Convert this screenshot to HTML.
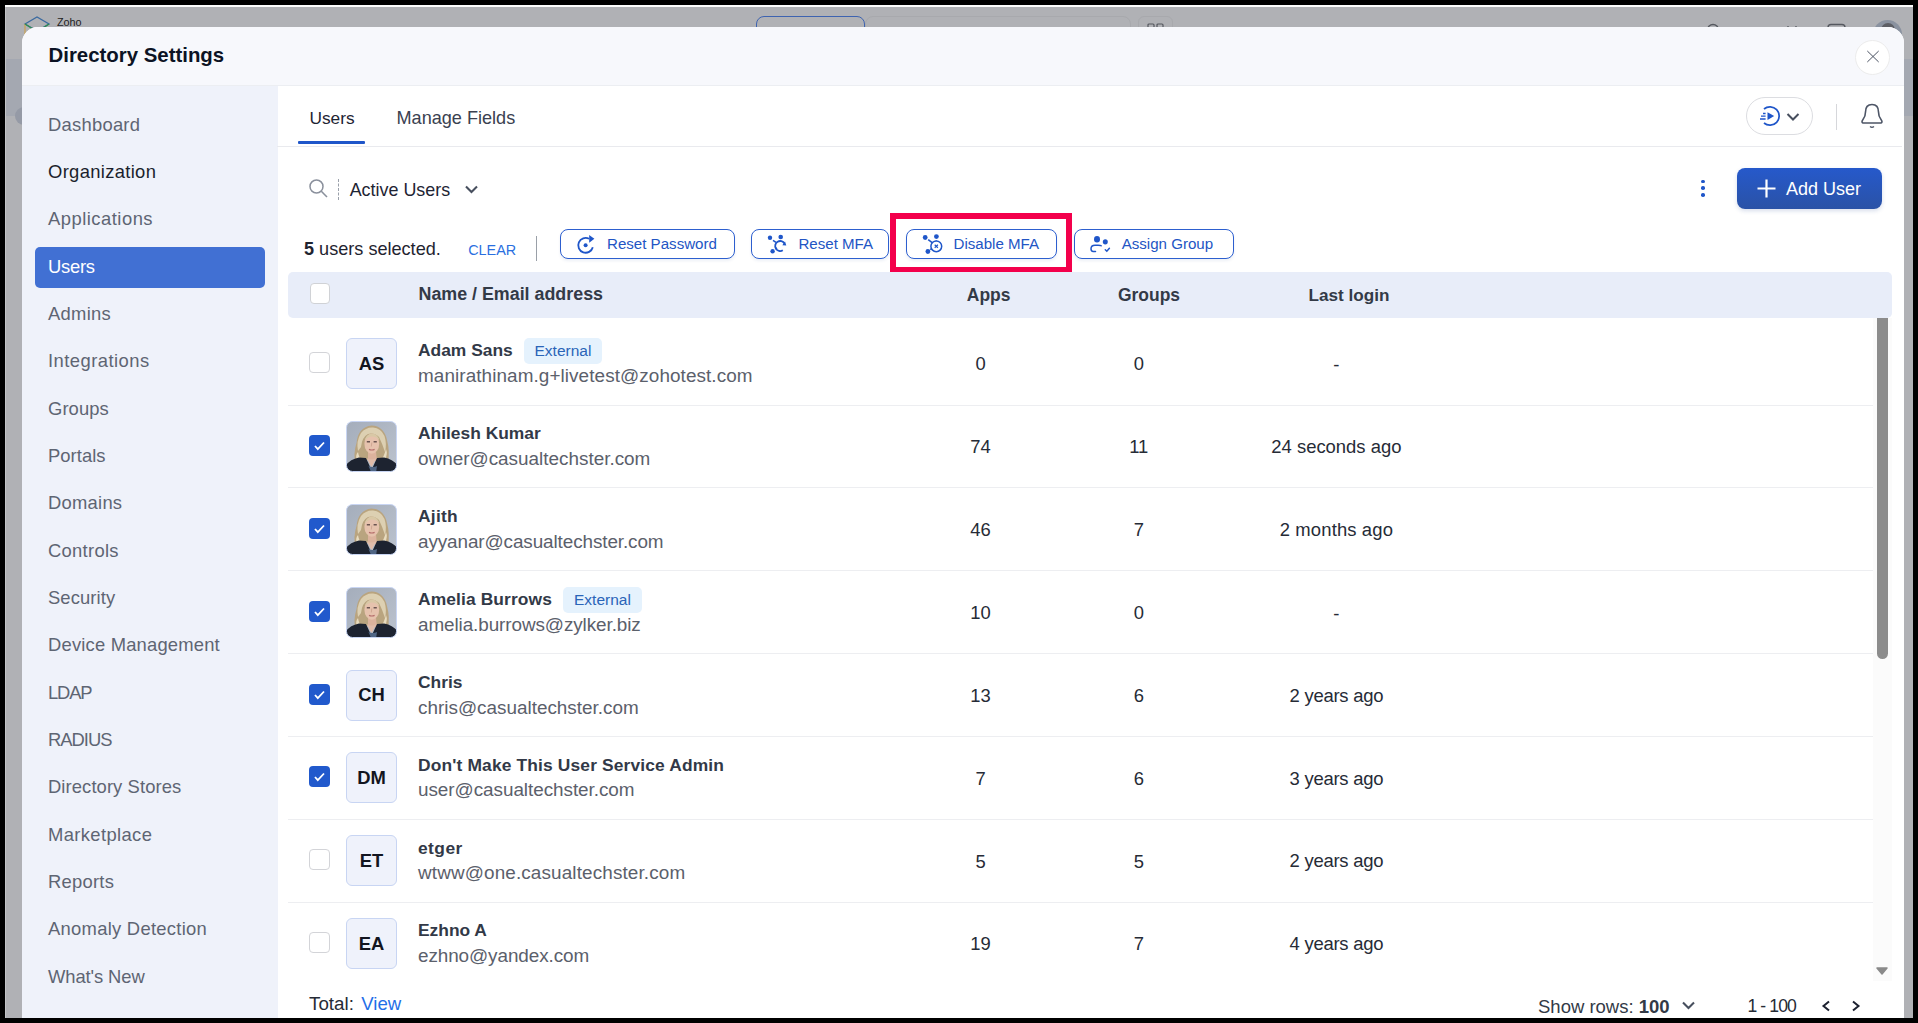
<!DOCTYPE html>
<html><head><meta charset="utf-8"><style>
html,body{margin:0;padding:0;}
body{width:1918px;height:1023px;background:#000;position:relative;overflow:hidden;font-family:"Liberation Sans", sans-serif;}
.t{position:absolute;line-height:1;white-space:nowrap;}
.b{position:absolute;}
</style></head><body>
<div class="b" style="left:5px;top:5px;width:1908px;height:1013px;background:#b0b1b5;"></div>
<div class="b" style="left:5px;top:5px;width:1908px;height:2px;background:#fdfdfd;"></div>
<div class="b" style="left:5px;top:59px;width:1908px;height:57px;background:#a4a8b1;"></div>
<div class="b" style="left:5px;top:7px;width:1px;height:1011px;background:#c2c3c6;"></div>
<div class="b" style="left:15px;top:106.5px;width:18px;height:18px;border-radius:50%;background:#959aa6;"></div>
<svg class="b" style="left:22px;top:14px" width="30" height="30" viewBox="0 0 30 30"><path d="M3 10 L15 3 L27 10 L15 17 Z" fill="none" stroke="#3a6aa0" stroke-width="1.3"/><path d="M3 10 L3 25" stroke="#c9a45a" stroke-width="1.3"/><path d="M3 10 L11 15" stroke="#2f8f4f" stroke-width="1.3"/><path d="M21 14 L27 10" stroke="#2f8f4f" stroke-width="1.3"/></svg>
<div class="t" style="left:57.00px;top:17.46px;font-size:10.8px;font-weight:normal;color:#222;">Zoho</div>
<div class="b" style="left:756px;top:16px;width:109px;height:24px;border:1.5px solid #3e63b0;border-radius:8px;box-sizing:border-box;"></div>
<div class="t" style="left:779.00px;top:25.20px;font-size:13px;font-weight:normal;color:#3e63b0;">Personal</div>
<svg class="b" style="left:1147px;top:22px" width="18" height="8" viewBox="0 0 18 8"><rect x="1" y="2" width="6" height="6" rx="1" fill="none" stroke="#55585f" stroke-width="1.2"/><rect x="10" y="2" width="6" height="6" rx="1" fill="none" stroke="#55585f" stroke-width="1.2"/></svg>
<div class="b" style="left:1873px;top:19.5px;width:29px;height:29px;border-radius:50%;background:#8a92a0;"></div>
<div class="b" style="left:1881px;top:23px;width:14px;height:14px;border-radius:50%;background:#5d5f66;"></div>
<div class="b" style="left:865px;top:16px;width:266px;height:24px;border:1px solid #a8a9ad;border-radius:8px;box-sizing:border-box;"></div>
<div class="b" style="left:1138px;top:16px;width:35px;height:24px;border:1px solid #a8a9ad;border-radius:6px;box-sizing:border-box;"></div>
<svg class="b" style="left:1700px;top:20px" width="150" height="10" viewBox="0 0 150 10"><circle cx="13" cy="10" r="5.5" fill="none" stroke="#55585f" stroke-width="1.4"/><path d="M55 8 L55 10" stroke="#55585f" stroke-width="1.6"/><path d="M88 6 V10 M96 6 V10 M86 9 H102" stroke="#55585f" stroke-width="1.3"/><rect x="128" y="4.5" width="17" height="12" rx="3" fill="none" stroke="#55585f" stroke-width="1.4"/></svg>
<div class="t" style="left:886.00px;top:25.20px;font-size:13px;font-weight:normal;color:#45474c;">Search in Users</div>
<div class="b" style="left:22px;top:27px;width:1882px;height:991px;background:#ffffff;border-radius:16px 16px 0 0;overflow:hidden;"></div>
<div class="b" style="left:22px;top:27px;width:1882px;height:58px;background:#f7f8fc;border-radius:16px 16px 0 0;"></div>
<div class="b" style="left:22px;top:86px;width:256px;height:932px;background:#eff2fa;"></div>
<div class="t" style="left:48.50px;top:44.73px;font-size:20.4px;font-weight:bold;color:#0c1324;">Directory Settings</div>
<div class="b" style="left:1855.3px;top:40.4px;width:35px;height:35px;border-radius:50%;background:#fff;border:1px solid #ececec;box-sizing:border-box;"></div>
<svg class="b" style="left:1866px;top:50px" width="14" height="14" viewBox="0 0 14 14"><path d="M1.3 1 L12.7 12 M12.7 1 L1.3 12" stroke="#4a5262" stroke-width="1" fill="none"/></svg>
<div class="b" style="left:22px;top:85px;width:1882px;height:1px;background:#eceef2;"></div>
<div class="b" style="left:35px;top:247px;width:230px;height:41px;background:#4170d3;border-radius:5px;"></div>
<div class="t" style="left:48.00px;top:115.72px;font-size:18.4px;font-weight:normal;color:#5e6573;letter-spacing:0.25px;">Dashboard</div>
<div class="t" style="left:48.00px;top:163.05px;font-size:18.4px;font-weight:normal;color:#1a1f2c;letter-spacing:0.327px;">Organization</div>
<div class="t" style="left:48.00px;top:210.38px;font-size:18.4px;font-weight:normal;color:#5e6573;letter-spacing:0.491px;">Applications</div>
<div class="t" style="left:48.00px;top:257.71px;font-size:18.4px;font-weight:normal;color:#ffffff;letter-spacing:-0.25px;">Users</div>
<div class="t" style="left:48.00px;top:305.04px;font-size:18.4px;font-weight:normal;color:#5e6573;letter-spacing:0.28px;">Admins</div>
<div class="t" style="left:48.00px;top:352.37px;font-size:18.4px;font-weight:normal;color:#5e6573;letter-spacing:0.455px;">Integrations</div>
<div class="t" style="left:48.00px;top:399.70px;font-size:18.4px;font-weight:normal;color:#5e6573;letter-spacing:0.08px;">Groups</div>
<div class="t" style="left:48.00px;top:447.03px;font-size:18.4px;font-weight:normal;color:#5e6573;letter-spacing:0.05px;">Portals</div>
<div class="t" style="left:48.00px;top:494.36px;font-size:18.4px;font-weight:normal;color:#5e6573;letter-spacing:0.25px;">Domains</div>
<div class="t" style="left:48.00px;top:541.69px;font-size:18.4px;font-weight:normal;color:#5e6573;letter-spacing:0.286px;">Controls</div>
<div class="t" style="left:48.00px;top:589.02px;font-size:18.4px;font-weight:normal;color:#5e6573;letter-spacing:0.1px;">Security</div>
<div class="t" style="left:48.00px;top:636.35px;font-size:18.4px;font-weight:normal;color:#5e6573;letter-spacing:0.188px;">Device Management</div>
<div class="t" style="left:48.00px;top:683.68px;font-size:18.4px;font-weight:normal;color:#5e6573;letter-spacing:-1.167px;">LDAP</div>
<div class="t" style="left:48.00px;top:731.01px;font-size:18.4px;font-weight:normal;color:#5e6573;letter-spacing:-1.0px;">RADIUS</div>
<div class="t" style="left:48.00px;top:778.34px;font-size:18.4px;font-weight:normal;color:#5e6573;letter-spacing:0.093px;">Directory Stores</div>
<div class="t" style="left:48.00px;top:825.67px;font-size:18.4px;font-weight:normal;color:#5e6573;letter-spacing:0.37px;">Marketplace</div>
<div class="t" style="left:48.00px;top:873.00px;font-size:18.4px;font-weight:normal;color:#5e6573;letter-spacing:0.25px;">Reports</div>
<div class="t" style="left:48.00px;top:920.33px;font-size:18.4px;font-weight:normal;color:#5e6573;letter-spacing:0.275px;">Anomaly Detection</div>
<div class="t" style="left:48.00px;top:967.66px;font-size:18.4px;font-weight:normal;color:#5e6573;letter-spacing:-0.089px;">What's New</div>
<div class="t" style="left:309.50px;top:110.36px;font-size:17.3px;font-weight:normal;color:#1e2433;">Users</div>
<div class="t" style="left:396.50px;top:109.28px;font-size:18.1px;font-weight:normal;color:#3a4150;">Manage Fields</div>
<div class="b" style="left:298px;top:141px;width:67px;height:3px;background:#1f56c9;border-radius:1px;"></div>
<div class="b" style="left:277px;top:146px;width:1625px;height:1px;background:#e9eaee;"></div>
<div class="b" style="left:1746px;top:97px;width:67px;height:38px;border-radius:19px;border:1px solid #dcdde1;box-sizing:border-box;background:#fff;"></div>
<svg class="b" style="left:1757px;top:104px" width="26" height="24" viewBox="0 0 26 24"><path d="M7 5 A9.2 9.2 0 1 1 7 19" fill="none" stroke="#1f56c9" stroke-width="1.7"/><path d="M10.5 8.2 L17.2 12.1 L10.5 16 Z" fill="#1f56c9"/><path d="M6 9.5 H8.6 M4 12.2 H8.6 M3 15 H8.6" stroke="#1f56c9" stroke-width="1.3"/></svg>
<svg class="b" style="left:1786px;top:112px" width="14" height="10" viewBox="0 0 14 10"><path d="M1.5 2 L7 7.5 L12.5 2" fill="none" stroke="#474f5e" stroke-width="2"/></svg>
<div class="b" style="left:1836px;top:104px;width:1px;height:26px;background:#d6d7db;"></div>
<svg class="b" style="left:1859px;top:101px" width="26" height="30" viewBox="0 0 26 30"><path d="M4 22 Q2 21 4 18.5 Q6.5 15.5 6.5 11 Q6.5 3.5 13 3.5 Q19.5 3.5 19.5 11 Q19.5 15.5 22 18.5 Q24 21 22 22 Z" fill="none" stroke="#4d5566" stroke-width="1.6"/><path d="M11 25.5 Q13 27 15 25.5" fill="none" stroke="#4d5566" stroke-width="1.4"/></svg>
<svg class="b" style="left:308px;top:178px" width="22" height="22" viewBox="0 0 22 22"><circle cx="8.5" cy="8.5" r="6.5" fill="none" stroke="#8a909c" stroke-width="1.5"/><path d="M13.3 13.3 L19 19" stroke="#8a909c" stroke-width="1.6"/></svg>
<div class="b" style="left:338px;top:179px;width:0;height:21px;border-left:1px dashed #9aa0aa;"></div>
<div class="t" style="left:349.70px;top:181.65px;font-size:17.9px;font-weight:normal;color:#1e2433;">Active Users</div>
<svg class="b" style="left:464px;top:184px" width="15" height="11" viewBox="0 0 15 11"><path d="M2 2.5 L7.5 8 L13 2.5" fill="none" stroke="#474f5e" stroke-width="2.1"/></svg>
<div class="b" style="left:1701.0px;top:179.5px;width:3.6px;height:3.6px;border-radius:50%;background:#1f56c9;"></div>
<div class="b" style="left:1701.0px;top:186.2px;width:3.6px;height:3.6px;border-radius:50%;background:#1f56c9;"></div>
<div class="b" style="left:1701.0px;top:193.0px;width:3.6px;height:3.6px;border-radius:50%;background:#1f56c9;"></div>
<div class="b" style="left:1737px;top:168px;width:145px;height:41px;background:linear-gradient(#2659cb,#2a52a6);border-radius:8px;box-shadow:0 2px 4px rgba(40,70,150,0.18);"></div>
<svg class="b" style="left:1756px;top:178px" width="21" height="21" viewBox="0 0 21 21"><path d="M10.5 1.5 V19.5 M1.5 10.5 H19.5" stroke="#fff" stroke-width="2.2"/></svg>
<div class="t" style="left:1786.00px;top:179.56px;font-size:18px;font-weight:normal;color:#ffffff;">Add User</div>
<div class="t" style="left:304.00px;top:239.88px;font-size:18.1px;font-weight:normal;color:#1f2430;"><b>5</b> users selected.</div>
<div class="t" style="left:468.20px;top:243.01px;font-size:14.4px;font-weight:normal;color:#2a6fe0;">CLEAR</div>
<div class="b" style="left:536px;top:236px;width:1px;height:25px;background:#9aa0a8;"></div>
<div class="b" style="left:560px;top:229px;width:175px;height:30px;border:1px solid #2d5fcf;border-radius:8px;box-sizing:border-box;background:#fff;box-shadow:0 2px 3px rgba(30,60,140,0.08);"></div>
<svg class="b" style="left:574px;top:232px" width="24" height="24" viewBox="0 0 24 24"><path d="M15.1 6.8 A7.4 7.4 0 1 0 18.8 15.2" fill="none" stroke="#1f56c9" stroke-width="1.8"/><path d="M15.2 2.9 L20.4 6.8 L15.2 10.7 Z" fill="#1f56c9"/><circle cx="11.6" cy="13.3" r="2" fill="#1f56c9"/></svg>
<div class="t" style="left:607.00px;top:236.02px;font-size:15.1px;font-weight:normal;color:#2255c4;">Reset Password</div>
<div class="b" style="left:751px;top:229px;width:138px;height:30px;border:1px solid #2d5fcf;border-radius:8px;box-sizing:border-box;background:#fff;box-shadow:0 2px 3px rgba(30,60,140,0.08);"></div>
<svg class="b" style="left:764px;top:230px" width="28" height="28" viewBox="0 0 28 28"><circle cx="6" cy="7.8" r="2.2" fill="#1f56c9"/><circle cx="16.7" cy="7" r="2.3" fill="#1f56c9"/><circle cx="8.6" cy="21.2" r="2.2" fill="#1f56c9"/><path d="M9 10.3 L12 12.3" stroke="#1f56c9" stroke-width="1.6"/><path d="M20.5 13.5 A5 5 0 1 0 18.8 20.3" fill="none" stroke="#1f56c9" stroke-width="1.8"/><path d="M18.3 15.3 L22.3 15.4 L21 11.5 Z" fill="#1f56c9"/><path d="M11.4 19 L13 18" stroke="#1f56c9" stroke-width="1.6"/></svg>
<div class="t" style="left:798.40px;top:236.02px;font-size:15.1px;font-weight:normal;color:#2255c4;">Reset MFA</div>
<div class="b" style="left:906px;top:229px;width:151px;height:30px;border:1px solid #2d5fcf;border-radius:8px;box-sizing:border-box;background:#fff;box-shadow:0 2px 3px rgba(30,60,140,0.08);"></div>
<svg class="b" style="left:918px;top:230px" width="28" height="28" viewBox="0 0 28 28"><circle cx="7.2" cy="7.5" r="2.4" fill="#1f56c9"/><circle cx="18.4" cy="6.6" r="2.4" fill="#1f56c9"/><circle cx="9.9" cy="21.5" r="2.4" fill="#1f56c9"/><path d="M10.2 9.6 L14.5 12.8" stroke="#1f56c9" stroke-width="1.6"/><circle cx="18.3" cy="16.3" r="5.4" fill="none" stroke="#1f56c9" stroke-width="1.5"/><path d="M16.7 14.8 L19.9 17.8 M19.9 14.8 L16.7 17.8" stroke="#1f56c9" stroke-width="1.2"/><path d="M12.2 19.5 L13.8 19" stroke="#1f56c9" stroke-width="1.6"/><path d="M18.3 10.5 V11" stroke="#1f56c9" stroke-width="1.6"/></svg>
<div class="t" style="left:953.50px;top:236.02px;font-size:15.1px;font-weight:normal;color:#2255c4;">Disable MFA</div>
<div class="b" style="left:1074px;top:229px;width:160px;height:30px;border:1px solid #2d5fcf;border-radius:8px;box-sizing:border-box;background:#fff;box-shadow:0 2px 3px rgba(30,60,140,0.08);"></div>
<svg class="b" style="left:1086px;top:230px" width="28" height="28" viewBox="0 0 28 28"><ellipse cx="11" cy="9.3" rx="3" ry="3.2" fill="#1f56c9"/><ellipse cx="19.3" cy="11.8" rx="2.5" ry="2.6" fill="#1f56c9"/><path d="M15.2 15.8 Q14.5 15.2 12 15.2 H9 Q5 15.2 5 18.8 Q5 21.5 7.2 21.5 H9.5" fill="none" stroke="#1f56c9" stroke-width="1.5" stroke-linecap="round"/><path d="M19.3 19.8 L20.8 21.2 L23.4 18.2" fill="none" stroke="#1f56c9" stroke-width="1.5" stroke-linecap="round"/></svg>
<div class="t" style="left:1121.70px;top:236.02px;font-size:15.1px;font-weight:normal;color:#2255c4;">Assign Group</div>
<div class="b" style="left:889.5px;top:213px;width:182.5px;height:59.5px;border:6.5px solid #f3004c;box-sizing:border-box;"></div>
<div class="b" style="left:288px;top:272px;width:1604px;height:46px;background:#e8edf9;border-radius:5px;"></div>
<div class="b" style="left:310px;top:283px;width:20px;height:21px;background:#fff;border:1.2px solid #d0d2d6;border-radius:4px;box-sizing:border-box;"></div>
<div class="t" style="left:418.50px;top:286.39px;font-size:17.85px;font-weight:bold;color:#333a47;">Name / Email address</div>
<div class="t" style="left:966.80px;top:286.53px;font-size:17.45px;font-weight:bold;color:#333a47;">Apps</div>
<div class="t" style="left:1118.00px;top:286.53px;font-size:17.45px;font-weight:bold;color:#333a47;">Groups</div>
<div class="t" style="left:1308.50px;top:286.78px;font-size:17.15px;font-weight:bold;color:#333a47;">Last login</div>
<div class="b" style="left:1873px;top:318px;width:19px;height:663px;background:#fbfbfb;"></div>
<div class="b" style="left:1877px;top:318px;width:11px;height:341px;background:#8c8c8c;border-radius:0 0 6px 6px;"></div>
<svg class="b" style="left:1875px;top:965px" width="14" height="12" viewBox="0 0 14 12"><path d="M2 3 H12 L7 9 Z" fill="#8a8a8a" stroke="#8a8a8a" stroke-width="1.5" stroke-linejoin="round"/></svg>
<div class="b" style="left:288px;top:405px;width:1585px;height:1px;background:#edeef1;"></div>
<div class="b" style="left:309px;top:352.2px;width:21px;height:20.5px;background:#fff;border:1.2px solid #d3d4d8;border-radius:4px;box-sizing:border-box;"></div>
<div class="b" style="left:346px;top:338.2px;width:51px;height:51.0px;background:#eff2fb;border:1px solid #c8d5f3;border-radius:6px;box-sizing:border-box;"></div>
<div class="t" style="left:341.50px;width:60px;text-align:center;top:354.62px;font-size:18.4px;font-weight:bold;color:#121520;">AS</div>
<div class="t" style="left:418.00px;top:342.47px;font-size:17.4px;font-weight:bold;color:#323947;letter-spacing:0px;">Adam Sans</div>
<div class="b" style="left:523.5px;top:338.2px;width:78.5px;height:26.0px;background:#e5f2fd;border-radius:5px;"></div>
<div class="t" style="left:534.50px;top:343.08px;font-size:15.5px;font-weight:normal;color:#2a64b8;">External</div>
<div class="t" style="left:418.00px;top:367.20px;font-size:18.9px;font-weight:normal;color:#5b606b;letter-spacing:0.086px;">manirathinam.g+livetest@zohotest.com</div>
<div class="t" style="left:940.50px;width:80px;text-align:center;top:355.42px;font-size:18.4px;font-weight:normal;color:#262b36;">0</div>
<div class="t" style="left:1098.80px;width:80px;text-align:center;top:355.42px;font-size:18.4px;font-weight:normal;color:#262b36;">0</div>
<div class="t" style="left:1216.40px;width:240px;text-align:center;top:356.38px;font-size:18.45px;font-weight:normal;color:#262b36;letter-spacing:0px;">-</div>
<div class="b" style="left:288px;top:487px;width:1585px;height:1px;background:#edeef1;"></div>
<svg class="b" style="left:309px;top:435.05px" width="22" height="22" viewBox="0 0 22 22"><rect x="0" y="0" width="21" height="21" rx="4" fill="#2159cc"/><path d="M6 11 L8.8 14.2 L15 7.5" fill="none" stroke="#fff" stroke-width="1.8"/></svg>
<svg class="b" style="left:346px;top:421.05px" width="51" height="51" viewBox="0 0 51 51"><defs><clipPath id="c1"><rect x="0.5" y="0.5" width="50" height="50" rx="6"/></clipPath><linearGradient id="g1" x1="0" y1="0" x2="1" y2="1"><stop offset="0" stop-color="#a4adbb"/><stop offset="1" stop-color="#bcc3ce"/></linearGradient></defs><g clip-path="url(#c1)"><rect width="51" height="51" fill="url(#g1)"/><path d="M9.5 43 Q7 33 10.5 22 Q12 6 25.5 4.5 Q38 5 41 19 Q44 30 42 42 Q36 45 31 39 L20 39 Q15 46 9.5 43 Z" fill="#b9a47f"/><path d="M12 30 Q10 20 15 12 Q20 6 27 6.5 Q35 7 38.5 15 Q41 23 39 31 Q36 22 33 16 Q28 11 22 13 Q16 16 15 26 Z" fill="#ddd0b2"/><path d="M11 40 Q9 34 12 31 Q13 37 16 40 Z M39 39 Q42 33 40 28 Q38 35 36 38Z" fill="#e8dcc0"/><path d="M22 31 L22 40 L31 40 L30 31 Z" fill="#dcb39d"/><ellipse cx="25.8" cy="22.8" rx="7.4" ry="10" fill="#e6c2ad"/><path d="M18.6 20 Q20 13 26 12.5 Q32 13 33.4 19.5 Q30 15 25.5 15.5 Q21 16 18.6 20Z" fill="#d9c8a6"/><path d="M20.8 20.7 H24 M27.6 20.7 H30.8" stroke="#6b5450" stroke-width="1.4"/><path d="M25.8 21.5 L25.3 25.5" stroke="#c99f8c" stroke-width="0.8"/><path d="M23 28.4 Q25.8 29.6 28.6 28.4" stroke="#b46d6b" stroke-width="1.2" fill="none"/><path d="M-2 52 L-1 46 Q3 38.5 13 36.5 L20 37 L25.5 49 L31 37 L38 36.5 Q48 38.5 52 45 L52 52 Z" fill="#1d2330"/><path d="M20.5 37 L25.5 46 L30.5 37 Q25.5 40 20.5 37Z" fill="#e0bcaa"/><path d="M22.5 45 L25.5 52 L30 52 L31 45 Q27 47 22.5 45Z" fill="#4f6584"/></g><rect x="0.5" y="0.5" width="50" height="50" rx="6" fill="none" stroke="#c8d5f3"/></svg>
<div class="t" style="left:418.00px;top:425.32px;font-size:17.4px;font-weight:bold;color:#323947;letter-spacing:0px;">Ahilesh Kumar</div>
<div class="t" style="left:418.00px;top:450.05px;font-size:18.9px;font-weight:normal;color:#5b606b;letter-spacing:0px;">owner@casualtechster.com</div>
<div class="t" style="left:940.50px;width:80px;text-align:center;top:438.27px;font-size:18.4px;font-weight:normal;color:#262b36;">74</div>
<div class="t" style="left:1098.80px;width:80px;text-align:center;top:438.27px;font-size:18.4px;font-weight:normal;color:#262b36;">11</div>
<div class="t" style="left:1216.40px;width:240px;text-align:center;top:438.23px;font-size:18.45px;font-weight:normal;color:#262b36;letter-spacing:0px;">24 seconds ago</div>
<div class="b" style="left:288px;top:570px;width:1585px;height:1px;background:#edeef1;"></div>
<svg class="b" style="left:309px;top:517.9px" width="22" height="22" viewBox="0 0 22 22"><rect x="0" y="0" width="21" height="21" rx="4" fill="#2159cc"/><path d="M6 11 L8.8 14.2 L15 7.5" fill="none" stroke="#fff" stroke-width="1.8"/></svg>
<svg class="b" style="left:346px;top:503.9px" width="51" height="51" viewBox="0 0 51 51"><defs><clipPath id="c2"><rect x="0.5" y="0.5" width="50" height="50" rx="6"/></clipPath><linearGradient id="g2" x1="0" y1="0" x2="1" y2="1"><stop offset="0" stop-color="#a4adbb"/><stop offset="1" stop-color="#bcc3ce"/></linearGradient></defs><g clip-path="url(#c2)"><rect width="51" height="51" fill="url(#g2)"/><path d="M9.5 43 Q7 33 10.5 22 Q12 6 25.5 4.5 Q38 5 41 19 Q44 30 42 42 Q36 45 31 39 L20 39 Q15 46 9.5 43 Z" fill="#b9a47f"/><path d="M12 30 Q10 20 15 12 Q20 6 27 6.5 Q35 7 38.5 15 Q41 23 39 31 Q36 22 33 16 Q28 11 22 13 Q16 16 15 26 Z" fill="#ddd0b2"/><path d="M11 40 Q9 34 12 31 Q13 37 16 40 Z M39 39 Q42 33 40 28 Q38 35 36 38Z" fill="#e8dcc0"/><path d="M22 31 L22 40 L31 40 L30 31 Z" fill="#dcb39d"/><ellipse cx="25.8" cy="22.8" rx="7.4" ry="10" fill="#e6c2ad"/><path d="M18.6 20 Q20 13 26 12.5 Q32 13 33.4 19.5 Q30 15 25.5 15.5 Q21 16 18.6 20Z" fill="#d9c8a6"/><path d="M20.8 20.7 H24 M27.6 20.7 H30.8" stroke="#6b5450" stroke-width="1.4"/><path d="M25.8 21.5 L25.3 25.5" stroke="#c99f8c" stroke-width="0.8"/><path d="M23 28.4 Q25.8 29.6 28.6 28.4" stroke="#b46d6b" stroke-width="1.2" fill="none"/><path d="M-2 52 L-1 46 Q3 38.5 13 36.5 L20 37 L25.5 49 L31 37 L38 36.5 Q48 38.5 52 45 L52 52 Z" fill="#1d2330"/><path d="M20.5 37 L25.5 46 L30.5 37 Q25.5 40 20.5 37Z" fill="#e0bcaa"/><path d="M22.5 45 L25.5 52 L30 52 L31 45 Q27 47 22.5 45Z" fill="#4f6584"/></g><rect x="0.5" y="0.5" width="50" height="50" rx="6" fill="none" stroke="#c8d5f3"/></svg>
<div class="t" style="left:418.00px;top:508.17px;font-size:17.4px;font-weight:bold;color:#323947;letter-spacing:0.25px;">Ajith</div>
<div class="t" style="left:418.00px;top:532.90px;font-size:18.9px;font-weight:normal;color:#5b606b;letter-spacing:-0.1px;">ayyanar@casualtechster.com</div>
<div class="t" style="left:940.50px;width:80px;text-align:center;top:521.12px;font-size:18.4px;font-weight:normal;color:#262b36;">46</div>
<div class="t" style="left:1098.80px;width:80px;text-align:center;top:521.12px;font-size:18.4px;font-weight:normal;color:#262b36;">7</div>
<div class="t" style="left:1216.40px;width:240px;text-align:center;top:521.08px;font-size:18.45px;font-weight:normal;color:#262b36;letter-spacing:0.13px;">2 months ago</div>
<div class="b" style="left:288px;top:653px;width:1585px;height:1px;background:#edeef1;"></div>
<svg class="b" style="left:309px;top:600.75px" width="22" height="22" viewBox="0 0 22 22"><rect x="0" y="0" width="21" height="21" rx="4" fill="#2159cc"/><path d="M6 11 L8.8 14.2 L15 7.5" fill="none" stroke="#fff" stroke-width="1.8"/></svg>
<svg class="b" style="left:346px;top:586.75px" width="51" height="51" viewBox="0 0 51 51"><defs><clipPath id="c3"><rect x="0.5" y="0.5" width="50" height="50" rx="6"/></clipPath><linearGradient id="g3" x1="0" y1="0" x2="1" y2="1"><stop offset="0" stop-color="#a4adbb"/><stop offset="1" stop-color="#bcc3ce"/></linearGradient></defs><g clip-path="url(#c3)"><rect width="51" height="51" fill="url(#g3)"/><path d="M9.5 43 Q7 33 10.5 22 Q12 6 25.5 4.5 Q38 5 41 19 Q44 30 42 42 Q36 45 31 39 L20 39 Q15 46 9.5 43 Z" fill="#b9a47f"/><path d="M12 30 Q10 20 15 12 Q20 6 27 6.5 Q35 7 38.5 15 Q41 23 39 31 Q36 22 33 16 Q28 11 22 13 Q16 16 15 26 Z" fill="#ddd0b2"/><path d="M11 40 Q9 34 12 31 Q13 37 16 40 Z M39 39 Q42 33 40 28 Q38 35 36 38Z" fill="#e8dcc0"/><path d="M22 31 L22 40 L31 40 L30 31 Z" fill="#dcb39d"/><ellipse cx="25.8" cy="22.8" rx="7.4" ry="10" fill="#e6c2ad"/><path d="M18.6 20 Q20 13 26 12.5 Q32 13 33.4 19.5 Q30 15 25.5 15.5 Q21 16 18.6 20Z" fill="#d9c8a6"/><path d="M20.8 20.7 H24 M27.6 20.7 H30.8" stroke="#6b5450" stroke-width="1.4"/><path d="M25.8 21.5 L25.3 25.5" stroke="#c99f8c" stroke-width="0.8"/><path d="M23 28.4 Q25.8 29.6 28.6 28.4" stroke="#b46d6b" stroke-width="1.2" fill="none"/><path d="M-2 52 L-1 46 Q3 38.5 13 36.5 L20 37 L25.5 49 L31 37 L38 36.5 Q48 38.5 52 45 L52 52 Z" fill="#1d2330"/><path d="M20.5 37 L25.5 46 L30.5 37 Q25.5 40 20.5 37Z" fill="#e0bcaa"/><path d="M22.5 45 L25.5 52 L30 52 L31 45 Q27 47 22.5 45Z" fill="#4f6584"/></g><rect x="0.5" y="0.5" width="50" height="50" rx="6" fill="none" stroke="#c8d5f3"/></svg>
<div class="t" style="left:418.00px;top:591.02px;font-size:17.4px;font-weight:bold;color:#323947;letter-spacing:0.11px;">Amelia Burrows</div>
<div class="b" style="left:563px;top:586.75px;width:78.5px;height:26.0px;background:#e5f2fd;border-radius:5px;"></div>
<div class="t" style="left:574.00px;top:591.63px;font-size:15.5px;font-weight:normal;color:#2a64b8;">External</div>
<div class="t" style="left:418.00px;top:615.75px;font-size:18.9px;font-weight:normal;color:#5b606b;letter-spacing:-0.09px;">amelia.burrows@zylker.biz</div>
<div class="t" style="left:940.50px;width:80px;text-align:center;top:603.97px;font-size:18.4px;font-weight:normal;color:#262b36;">10</div>
<div class="t" style="left:1098.80px;width:80px;text-align:center;top:603.97px;font-size:18.4px;font-weight:normal;color:#262b36;">0</div>
<div class="t" style="left:1216.40px;width:240px;text-align:center;top:604.93px;font-size:18.45px;font-weight:normal;color:#262b36;letter-spacing:0px;">-</div>
<div class="b" style="left:288px;top:736px;width:1585px;height:1px;background:#edeef1;"></div>
<svg class="b" style="left:309px;top:683.6px" width="22" height="22" viewBox="0 0 22 22"><rect x="0" y="0" width="21" height="21" rx="4" fill="#2159cc"/><path d="M6 11 L8.8 14.2 L15 7.5" fill="none" stroke="#fff" stroke-width="1.8"/></svg>
<div class="b" style="left:346px;top:669.6px;width:51px;height:51.0px;background:#eff2fb;border:1px solid #c8d5f3;border-radius:6px;box-sizing:border-box;"></div>
<div class="t" style="left:341.50px;width:60px;text-align:center;top:686.02px;font-size:18.4px;font-weight:bold;color:#121520;">CH</div>
<div class="t" style="left:418.00px;top:673.87px;font-size:17.4px;font-weight:bold;color:#323947;letter-spacing:0px;">Chris</div>
<div class="t" style="left:418.00px;top:698.60px;font-size:18.9px;font-weight:normal;color:#5b606b;letter-spacing:0px;">chris@casualtechster.com</div>
<div class="t" style="left:940.50px;width:80px;text-align:center;top:686.82px;font-size:18.4px;font-weight:normal;color:#262b36;">13</div>
<div class="t" style="left:1098.80px;width:80px;text-align:center;top:686.82px;font-size:18.4px;font-weight:normal;color:#262b36;">6</div>
<div class="t" style="left:1216.40px;width:240px;text-align:center;top:686.78px;font-size:18.45px;font-weight:normal;color:#262b36;letter-spacing:-0.24px;">2 years ago</div>
<div class="b" style="left:288px;top:819px;width:1585px;height:1px;background:#edeef1;"></div>
<svg class="b" style="left:309px;top:766.45px" width="22" height="22" viewBox="0 0 22 22"><rect x="0" y="0" width="21" height="21" rx="4" fill="#2159cc"/><path d="M6 11 L8.8 14.2 L15 7.5" fill="none" stroke="#fff" stroke-width="1.8"/></svg>
<div class="b" style="left:346px;top:752.45px;width:51px;height:51.0px;background:#eff2fb;border:1px solid #c8d5f3;border-radius:6px;box-sizing:border-box;"></div>
<div class="t" style="left:341.50px;width:60px;text-align:center;top:768.87px;font-size:18.4px;font-weight:bold;color:#121520;">DM</div>
<div class="t" style="left:418.00px;top:756.72px;font-size:17.4px;font-weight:bold;color:#323947;letter-spacing:0.145px;">Don't Make This User Service Admin</div>
<div class="t" style="left:418.00px;top:781.45px;font-size:18.9px;font-weight:normal;color:#5b606b;letter-spacing:-0.05px;">user@casualtechster.com</div>
<div class="t" style="left:940.50px;width:80px;text-align:center;top:769.67px;font-size:18.4px;font-weight:normal;color:#262b36;">7</div>
<div class="t" style="left:1098.80px;width:80px;text-align:center;top:769.67px;font-size:18.4px;font-weight:normal;color:#262b36;">6</div>
<div class="t" style="left:1216.40px;width:240px;text-align:center;top:769.63px;font-size:18.45px;font-weight:normal;color:#262b36;letter-spacing:-0.24px;">3 years ago</div>
<div class="b" style="left:288px;top:902px;width:1585px;height:1px;background:#edeef1;"></div>
<div class="b" style="left:309px;top:849.3px;width:21px;height:20.5px;background:#fff;border:1.2px solid #d3d4d8;border-radius:4px;box-sizing:border-box;"></div>
<div class="b" style="left:346px;top:835.3px;width:51px;height:51.0px;background:#eff2fb;border:1px solid #c8d5f3;border-radius:6px;box-sizing:border-box;"></div>
<div class="t" style="left:341.50px;width:60px;text-align:center;top:851.72px;font-size:18.4px;font-weight:bold;color:#121520;">ET</div>
<div class="t" style="left:418.00px;top:839.57px;font-size:17.4px;font-weight:bold;color:#323947;letter-spacing:0.45px;">etger</div>
<div class="t" style="left:418.00px;top:864.30px;font-size:18.9px;font-weight:normal;color:#5b606b;letter-spacing:0.13px;">wtww@one.casualtechster.com</div>
<div class="t" style="left:940.50px;width:80px;text-align:center;top:852.52px;font-size:18.4px;font-weight:normal;color:#262b36;">5</div>
<div class="t" style="left:1098.80px;width:80px;text-align:center;top:852.52px;font-size:18.4px;font-weight:normal;color:#262b36;">5</div>
<div class="t" style="left:1216.40px;width:240px;text-align:center;top:852.48px;font-size:18.45px;font-weight:normal;color:#262b36;letter-spacing:-0.24px;">2 years ago</div>
<div class="b" style="left:309px;top:932.15px;width:21px;height:20.5px;background:#fff;border:1.2px solid #d3d4d8;border-radius:4px;box-sizing:border-box;"></div>
<div class="b" style="left:346px;top:918.15px;width:51px;height:51.0px;background:#eff2fb;border:1px solid #c8d5f3;border-radius:6px;box-sizing:border-box;"></div>
<div class="t" style="left:341.50px;width:60px;text-align:center;top:934.57px;font-size:18.4px;font-weight:bold;color:#121520;">EA</div>
<div class="t" style="left:418.00px;top:922.42px;font-size:17.4px;font-weight:bold;color:#323947;letter-spacing:0px;">Ezhno A</div>
<div class="t" style="left:418.00px;top:947.15px;font-size:18.9px;font-weight:normal;color:#5b606b;letter-spacing:-0.09px;">ezhno@yandex.com</div>
<div class="t" style="left:940.50px;width:80px;text-align:center;top:935.37px;font-size:18.4px;font-weight:normal;color:#262b36;">19</div>
<div class="t" style="left:1098.80px;width:80px;text-align:center;top:935.37px;font-size:18.4px;font-weight:normal;color:#262b36;">7</div>
<div class="t" style="left:1216.40px;width:240px;text-align:center;top:935.33px;font-size:18.45px;font-weight:normal;color:#262b36;letter-spacing:-0.24px;">4 years ago</div>
<div class="t" style="left:309.00px;top:994.99px;font-size:18.8px;font-weight:normal;color:#262b36;">Total:</div>
<div class="t" style="left:361.20px;top:995.16px;font-size:18.6px;font-weight:normal;color:#1f6fe8;">View</div>
<div class="t" style="left:1538.00px;top:997.64px;font-size:18.5px;font-weight:normal;color:#333a47;">Show rows: <b style="color:#333a47">100</b></div>
<svg class="b" style="left:1681px;top:1000px" width="15" height="11" viewBox="0 0 15 11"><path d="M2 2.5 L7.5 8 L13 2.5" fill="none" stroke="#474f5e" stroke-width="2.1"/></svg>
<div class="t" style="left:1747.50px;top:997.80px;font-size:17.6px;font-weight:normal;color:#262b36;letter-spacing:-0.9px;">1 - 100</div>
<svg class="b" style="left:1820px;top:999px" width="12" height="14" viewBox="0 0 12 14"><path d="M9 2.5 L3.5 7 L9 11.5" fill="none" stroke="#1c2130" stroke-width="2"/></svg>
<svg class="b" style="left:1850px;top:999px" width="12" height="14" viewBox="0 0 12 14"><path d="M3 2.5 L8.5 7 L3 11.5" fill="none" stroke="#1c2130" stroke-width="2"/></svg>
</body></html>
